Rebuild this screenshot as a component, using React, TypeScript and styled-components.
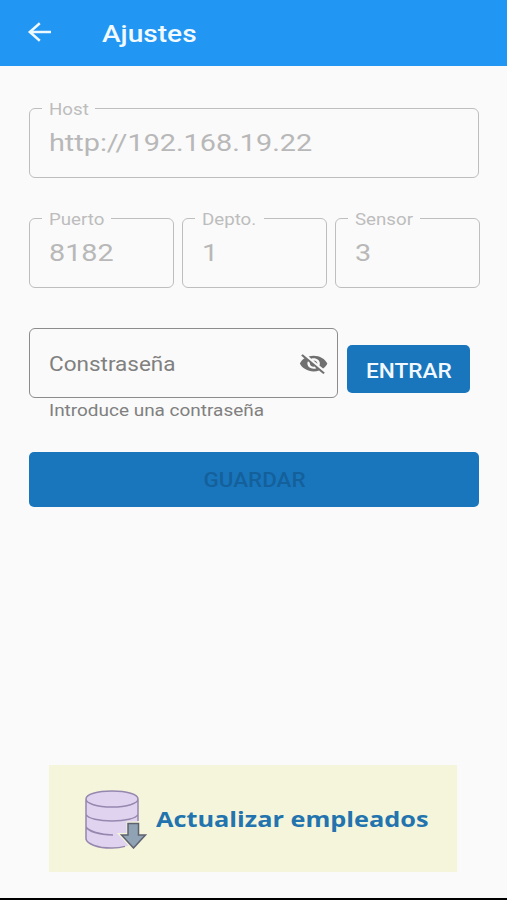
import React from "react";
import styled, { createGlobalStyle } from "styled-components";

const GlobalStyle = createGlobalStyle`
  *, *::before, *::after { box-sizing: border-box; }
  body { margin: 0; background: #fafafa; font-family: Roboto, sans-serif; }
`;

const Screen = styled.div`
  width: 507px;
  height: 900px;
  display: flex;
  flex-direction: column;
  background: #fafafa;
  border-bottom: 2px solid #000;
  overflow: hidden;
`;

const AppBar = styled.header`
  flex: none;
  height: 66px;
  display: flex;
  align-items: center;
  padding: 2px 0 0 27px;
  gap: 50px;
  background: #2196f3;
`;

const BackButton = styled.button`
  width: 25px;
  height: 24px;
  margin-top: -4px;
  padding: 0;
  border: 0;
  background: none;
  display: flex;
  align-items: center;
`;

/* Wide text: the type is stretched horizontally from its left edge. */
const Text = styled.span<{
  $size: number;
  $stretch: number;
  $color: string;
  $weight?: number;
  $center?: boolean;
}>`
  display: inline-block;
  white-space: nowrap;
  font-size: ${(p) => p.$size}px;
  font-weight: ${(p) => p.$weight ?? 400};
  color: ${(p) => p.$color};
  transform: scaleX(${(p) => p.$stretch});
  transform-origin: ${(p) => (p.$center ? "center" : "left")};
`;

const Form = styled.main`
  flex: none;
  display: flex;
  flex-direction: column;
  padding: 42px 28px 0 29px;
`;

const FieldRow = styled.div`
  display: grid;
  grid-template-columns: 145px 145px 145px;
  column-gap: 8px;
  margin: 40px 0;
`;

const Outline = styled.fieldset<{ $active?: boolean }>`
  margin: 0;
  min-width: 0;
  height: 70px;
  padding: 0 9px 0 12px;
  border: 1px solid ${(p) => (p.$active ? "#8c8c8c" : "#bebebe")};
  border-radius: 6px;
`;

const Legend = styled.legend<{ $width: number }>`
  width: ${(p) => p.$width}px;
  height: 1px;
  padding: 0 0 0 7px;
  line-height: 3px;
`;

const FieldBody = styled.div<{ $shift?: number }>`
  height: 68px;
  padding: ${(p) => p.$shift ?? 0}px 0 0 7px;
  display: flex;
  align-items: center;
  justify-content: space-between;
`;

const PasswordRow = styled.div`
  display: grid;
  grid-template-columns: 309px 123px;
  column-gap: 9px;
`;

const Helper = styled.div`
  height: 24px;
  padding-left: 20px;
  line-height: 24px;
`;

const Button = styled.button<{ $height: number }>`
  height: ${(p) => p.$height}px;
  padding: 0;
  border: 0;
  border-radius: 5px;
  background: #1976bd;
  font-family: inherit;
  display: flex;
  align-items: center;
  justify-content: center;
`;

const EnterButton = styled(Button)`
  margin-top: 17px;
  padding: 3px 0 0 1px;
`;

const SaveButton = styled(Button)`
  margin-top: 30px;
  padding: 1px 0 0 1px;
`;

const UpdateCard = styled.button`
  flex: none;
  width: 408px;
  height: 107px;
  margin: auto 0 26px 49px;
  padding: 0 0 2px 34px;
  border: 0;
  background: #f5f5dc;
  font-family: "Open Sans", sans-serif;
  display: flex;
  align-items: center;
  gap: 8px;
`;

interface FieldProps {
  label: string;
  value: string;
  gap: number;
}

function Field({ label, value, gap }: FieldProps) {
  return (
    <Outline>
      <Legend $width={gap}>
        <Text $size={17} $stretch={1.1} $color="#bdbdbd">{label}</Text>
      </Legend>
      <FieldBody>
        <Text $size={24} $stretch={1.2} $color="#b8b8b8">{value}</Text>
      </FieldBody>
    </Outline>
  );
}

function BackIcon() {
  return (
    <svg width="25" height="20" viewBox="0 0 25 20" fill="none" stroke="#eef8ff" strokeWidth="2.5">
      <path d="M24 10H3M12.800 1.200L2.800 10l10 8.800" />
    </svg>
  );
}

function HiddenIcon() {
  return (
    <svg width="30" height="25" viewBox="-0.5 0.9 24 24" preserveAspectRatio="none" fill="#707070">
      <path d="M12 7c2.76 0 5 2.24 5 5 0 .65-.13 1.26-.36 1.83l2.92 2.92c1.51-1.26 2.7-2.89 3.43-4.75-1.73-4.39-6-7.5-11-7.5-1.4 0-2.74.25-3.98.7l2.16 2.16C10.74 7.13 11.35 7 12 7zM2 4.27l2.28 2.28.46.46C3.08 8.3 1.78 10.02 1 12c1.73 4.39 6 7.5 11 7.5 1.55 0 3.03-.3 4.38-.84l.42.42L19.73 22 21 20.73 3.27 3 2 4.27zM7.53 9.8l1.55 1.55c-.05.21-.08.43-.08.65 0 1.66 1.34 3 3 3 .22 0 .44-.03.65-.08l1.55 1.55c-.67.33-1.41.53-2.2.53-2.76 0-5-2.24-5-5 0-.79.2-1.53.53-2.2zm4.31-.78l3.15 3.15.02-.16c0-1.66-1.34-3-3-3l-.17.01z" />
    </svg>
  );
}

function DatabaseIcon() {
  return (
    <svg width="65" height="62" viewBox="0 0 65 62" fill="none">
      <path d="M3 12C3 7.500 14 4 29 4s26 3.500 26 8v40c0 4.500-11 8.500-26 8.500S3 57 3 51z" fill="#dfd3f0" />
      <path d="M55 34V12c0-4.500-11-8-26-8S3 7.500 3 12v40c1 5 12 9.200 26 9 4 0 9-.5 13-1.600M3 12c0 4.500 11 8 26 8s26-3.500 26-8M3 27.500c2 4 13 6.500 26 6.500s24-2.500 26-6.500M3 40c3 4.500 14 7.500 27 8" stroke="#9587ae" strokeWidth="1.500" />
      <path d="M45.500 36.500h9.500V48h7L50.500 61 38.500 48h7z" stroke="#f5f5dc" strokeWidth="4" />
      <path d="M45 36.500h10.500V48H62.500L50.500 61 38.500 48H45z" fill="#8fa3b5" stroke="#5e6270" strokeWidth="1.500" />
    </svg>
  );
}

export default function App() {
  return (
    <>
      <GlobalStyle />
      <Screen>
        <AppBar>
          <BackButton aria-label="Atrás"><BackIcon /></BackButton>
          <Text as="h1" $size={24} $stretch={1.17} $color="#f2faff" $weight={500}>Ajustes</Text>
        </AppBar>
        <Form>
          <Field label="Host" value="http://192.168.19.22" gap={53} />
          <FieldRow>
            <Field label="Puerto" value="8182" gap={69} />
            <Field label="Depto." value="1" gap={69} />
            <Field label="Sensor" value="3" gap={72} />
          </FieldRow>
          <PasswordRow>
            <Outline $active>
              <FieldBody $shift={2}>
                <Text $size={20} $stretch={1.125} $color="#808080">Constraseña</Text>
                <HiddenIcon />
              </FieldBody>
            </Outline>
            <EnterButton $height={48}>
              <Text $size={20} $stretch={1.13} $color="#f2f8ff" $weight={500} $center>ENTRAR</Text>
            </EnterButton>
          </PasswordRow>
          <Helper>
            <Text $size={17} $stretch={1.115} $color="#808080">Introduce una contraseña</Text>
          </Helper>
          <SaveButton $height={55}>
            <Text $size={20} $stretch={1.12} $color="#14609b" $weight={500} $center>GUARDAR</Text>
          </SaveButton>
        </Form>
        <UpdateCard>
          <DatabaseIcon />
          <Text $size={22} $stretch={1.15} $color="#2374ae" $weight={700}>Actualizar empleados</Text>
        </UpdateCard>
      </Screen>
    </>
  );
}
